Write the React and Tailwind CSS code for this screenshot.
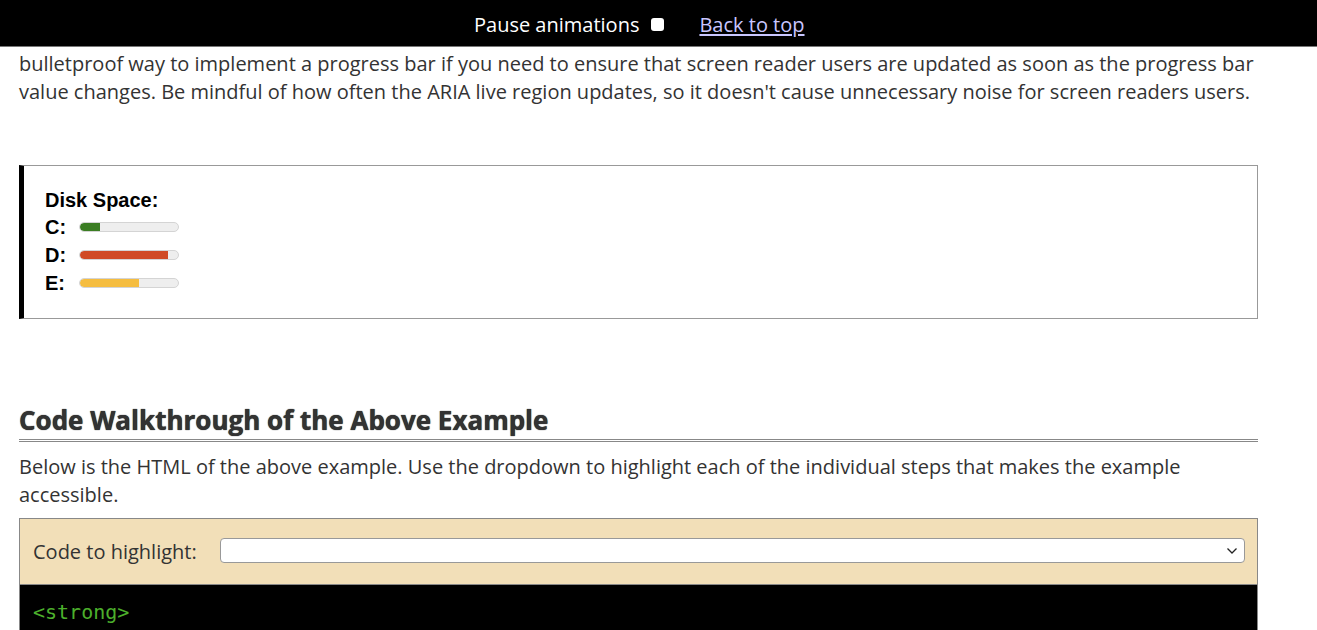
const OPEN = { fontFamily: '"Open Sans", "Noto Sans", sans-serif' };
const ARIAL = { fontFamily: '"Liberation Sans", Arial, sans-serif' };

const DRIVES = [
  { id: "C", pct: 20, color: "bg-[#3b7d23]" },
  { id: "D", pct: 90, color: "bg-[#d04a25]" },
  { id: "E", pct: 60, color: "bg-[#f5bd40]" },
];

const Meter = ({ pct, color }) => (
  <div className="w-[100px] h-[10px] rounded-full border border-[#d4d4d4] bg-[#eeeeee] overflow-hidden">
    <div className={`h-full rounded-l-full ${color}`} style={{ width: `${pct}%` }} />
  </div>
);

export default function App() {
  return (
    <div className="min-h-[630px] bg-white text-[#333]" style={OPEN}>
      {/* top bar */}
      <div className="h-[47px] bg-black flex items-center pt-[3px] pl-[474px] text-[20px] text-white border-b border-[#777]">
        <span>Pause animations</span>
        <span className="ml-[12px] w-[13px] h-[13px] rounded-[3px] bg-white inline-block" />
        <a href="#" className="ml-[35px] text-[#c9c6ff] underline underline-offset-2">Back to top</a>
      </div>

      <div className="px-[19px] w-[1258px] box-content">
        <p className="text-[20px] leading-[28px] mt-[3px] w-[1239px]">
          bulletproof way to implement a progress bar if you need to ensure that screen reader users are updated as soon as the progress bar value changes. Be mindful of how often the ARIA live region updates, so it doesn't cause unnecessary noise for screen readers users.
        </p>

        {/* example */}
        <div className="mt-[59px] w-[1239px] h-[154px] border border-[#999] border-l-[5px] border-l-black pl-[21px] pt-[21px]" style={ARIAL}>
          <div className="font-bold text-[20px] leading-[26px] text-black">Disk Space:</div>
          {DRIVES.map((d) => (
            <div key={d.id} className="flex items-center h-[28px]">
              <span className="w-[34px] font-bold text-[20px] text-black">{d.id}:</span>
              <Meter pct={d.pct} color={d.color} />
            </div>
          ))}
        </div>

        {/* walkthrough */}
        <h2
          className="mt-[85px] text-[26px] font-bold leading-[32px] text-[#333] pb-[3px] border-b-[3px] border-double border-[#888] w-[1239px]"
          style={{ ...OPEN, textShadow: "0 0 1px #000" }}
        >
          Code Walkthrough of the Above Example
        </h2>
        <p className="mt-[11px] text-[20px] leading-[28px] w-[1239px]">
          Below is the HTML of the above example. Use the dropdown to highlight each of the individual steps that makes the example accessible.
        </p>

        <div className="mt-[9px] w-[1239px] border border-[#888] bg-[#f2dfb8] h-[67px] flex items-center pl-[13px] pr-[12px]">
          <span className="text-[20px] mr-[23px]">Code to highlight:</span>
          <div className="flex-1 h-[25px] mt-[-2px] bg-white border border-[#999] rounded-[4px] flex items-center justify-end pr-[6px]">
            <svg width="12" height="8" viewBox="0 0 12 8" fill="none" stroke="#222" strokeWidth="1.3">
              <path d="M1.5 1.5 L6 6 L10.5 1.5" />
            </svg>
          </div>
        </div>
        <div className="w-[1239px] h-[60px] bg-black border-x border-[#888] pl-[13px] pt-[12px]">
          <span className="text-[20px] text-[#4caf2c]" style={{ fontFamily: '"DejaVu Sans Mono", "Liberation Mono", monospace' }}>
            &lt;strong&gt;
          </span>
        </div>
      </div>
    </div>
  );
}
